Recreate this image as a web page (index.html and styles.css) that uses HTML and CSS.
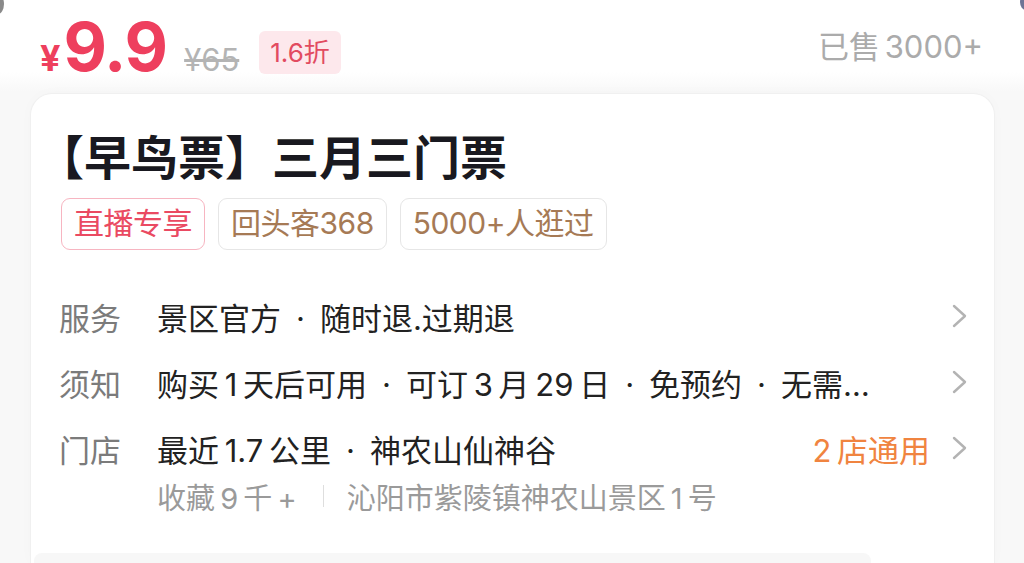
FILE: index.html
```html
<!DOCTYPE html>
<html lang="zh-CN">
<head>
    <meta charset="UTF-8">
    <meta name="viewport" content="width=device-width, initial-scale=1.0">
    <title>早鸟票 - 三月三门票</title>
    <link rel="stylesheet" href="styles.css">
</head>
<body>
    <div class="corner corner-left"></div>
    <div class="corner corner-right"></div>
    <div class="price-bar">
        <span class="yen">¥</span><span class="now">9.9</span>
        <s class="orig">¥65</s>
        <span class="discount">1.6折</span>
        <span class="sold">已售 3000+</span>
    </div>
    <section class="card">
        <h1 class="title">【早鸟票】三月三门票</h1>
        <div class="tags">
            <span class="tag tag-live">直播专享</span>
            <span class="tag">回头客368</span>
            <span class="tag">5000+人逛过</span>
        </div>
        <ul class="rows">
            <li class="row">
                <span class="label">服务</span>
                <span class="value">景区官方<i class="dot">·</i>随时退.过期退</span>
                <svg class="chev" viewBox="0 0 16 24"><polyline points="2,2 13,12 2,22"/></svg>
            </li>
            <li class="row">
                <span class="label">须知</span>
                <span class="value">购买 1 天后可用<i class="dot">·</i>可订 3 月 29 日<i class="dot">·</i>免预约<i class="dot">·</i>无需…</span>
                <svg class="chev" viewBox="0 0 16 24"><polyline points="2,2 13,12 2,22"/></svg>
            </li>
            <li class="row">
                <span class="label">门店</span>
                <span class="value">最近 1.7 公里<i class="dot">·</i>神农山仙神谷</span>
                <span class="extra">2 店通用</span>
                <svg class="chev" viewBox="0 0 16 24"><polyline points="2,2 13,12 2,22"/></svg>
            </li>
        </ul>
        <div class="sub">
            <span>收藏 9 千 +</span>
            <span class="sep"></span>
            <span>沁阳市紫陵镇神农山景区 1 号</span>
        </div>
        <div class="more"></div>
    </section>
</body>
</html>
```

FILE: styles.css
```css
body {
    margin: 0;
    height: 563px;
    overflow: hidden;
    background: linear-gradient(#fff 0, #fff 72px, #f8f8f8 92px);
    font-family: "Inter", "Noto Sans CJK SC", sans-serif;
}

.corner {
    position: absolute;
    top: -6px;
    width: 12px;
    height: 20px;
    border-radius: 50%;
}

.corner-left {
    left: -8px;
    background: #8a8a8a;
}

.corner-right {
    right: -8px;
    height: 16px;
    background: #6d7496;
}

.price-bar {
    display: flex;
    align-items: baseline;
    height: 93px;
    padding: 0 41px 0 40px;
    box-sizing: border-box;
    line-height: 93px;
}

.yen {
    color: #ee3f5e;
    font-size: 36px;
    font-weight: 700;
    margin-right: 3px;
}

.now {
    color: #ee3f5e;
    font-size: 67px;
    font-weight: 700;
    letter-spacing: -1px;
}

.orig {
    color: #b4b4b4;
    font-size: 31px;
    margin-left: 17px;
}

.discount {
    align-self: center;
    margin-left: 20px;
    margin-top: 12px;
    padding: 0 11px;
    line-height: 43px;
    border-radius: 6px;
    background: #fde8ec;
    color: #e24b60;
    font-size: 26px;
}

.sold {
    margin-left: auto;
    color: #ababab;
    font-size: 31px;
    word-spacing: -4px;
    position: relative;
    top: -13px;
}

.card {
    margin: 0 29px 0 30px;
    padding: 34px 26px 0 30px;
    background: #fff;
    border: 1px solid #f0f0f0;
    border-bottom: none;
    border-radius: 22px 22px 0 0;
    box-shadow: 0 0 14px rgba(0, 0, 0, 0.02);
}

.title {
    margin: 0 0 0 -24px;
    font-size: 47px;
    line-height: 60px;
    font-weight: 700;
    color: #191920;
}

.tags {
    display: flex;
    gap: 13px;
    margin-top: 10px;
}

.tag {
    height: 52px;
    box-sizing: border-box;
    padding: 0 12px;
    line-height: 49px;
    border: 1.5px solid #e6e6e6;
    border-radius: 9px;
    color: #a67a55;
    font-size: 30px;
    letter-spacing: -0.5px;
}

.tag-live {
    border-color: #f7b5c1;
    color: #ea4a62;
}

.rows {
    list-style: none;
    margin: 33px 0 0;
    padding: 0;
}

.row {
    display: flex;
    align-items: center;
    height: 66px;
    font-size: 31px;
    word-spacing: -3px;
}

.label {
    width: 96px;
    flex-shrink: 0;
    color: #7b7b7b;
    margin-left: -2px;
    margin-right: 2px;
}

.value {
    flex: 1;
    color: #222;
    white-space: nowrap;
}

.dot {
    font-style: normal;
    margin: 0 15px;
}

.extra {
    color: #f08440;
    margin-right: 22px;
}

.chev {
    width: 16px;
    height: 24px;
    fill: none;
    stroke: #b3b3b3;
    stroke-width: 2.4;
    stroke-linecap: round;
    stroke-linejoin: round;
}

.sub {
    display: flex;
    align-items: center;
    margin-left: 96px;
    height: 30px;
    color: #9a9a9a;
    font-size: 29px;
    word-spacing: -3px;
}

.sep {
    width: 1px;
    height: 22px;
    background: #dedede;
    margin: 0 23px 0 26px;
}

.more {
    margin: 42px 0 0 -27px;
    width: 837px;
    height: 10px;
    border-radius: 8px 8px 0 0;
    background: #f7f7f7;
}
```
